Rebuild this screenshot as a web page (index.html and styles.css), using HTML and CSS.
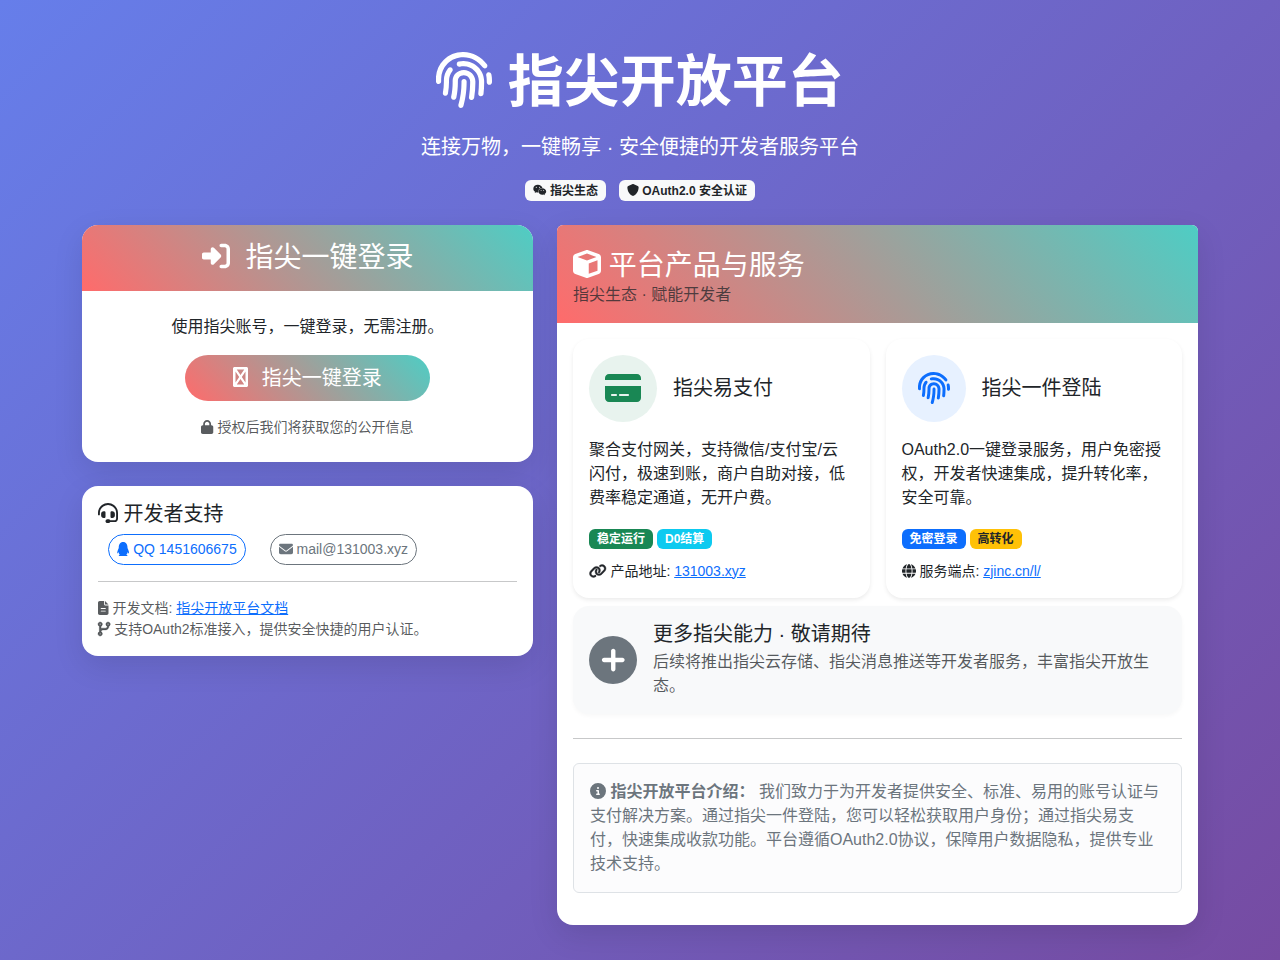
FILE: index.html
```html
<!DOCTYPE html>
<html lang="zh-CN">
<head>
    <meta charset="UTF-8">
    <meta name="viewport" content="width=device-width, initial-scale=1.0">
    <title>指尖开放平台</title>
    <link rel="stylesheet" href="styles.css">
</head>
<body>
    <svg class="sprite" aria-hidden="true">
        <symbol id="fingerprint" viewBox="0 0 512 512">
            <path d="M256.1 246c-13.25 0-23.1 10.75-23.1 23.1c1.125 72.25-8.124 141.9-27.75 211.5C201.7 491.3 206.6 512 227.5 512c10.5 0 20.12-6.875 23.12-17.5c13.5-47.87 30.1-125.4 29.5-224.5C280.1 256.8 269.4 246 256.1 246zM255.2 164.3C193.1 164.1 151.2 211.3 152.1 265.4c.75 47.87-3.75 95.87-13.37 142.5c-2.75 12.1 5.624 25.62 18.62 28.37c12.1 2.625 25.62-5.625 28.37-18.62c10.37-50.12 15.12-101.6 14.37-152.1C199.7 238.6 219.1 212.1 254.5 212.3c31.37 .5 57.24 25.37 57.62 55.5c.8749 47.1-2.75 96.25-10.62 143.5c-2.125 12.1 6.749 25.37 19.87 27.62c19.87 3.25 26.75-15.12 27.5-19.87c8.249-49.1 12.12-101.1 11.25-151.1C359.2 211.1 312.2 165.1 255.2 164.3zM144.6 144.5C134.2 136.1 119.2 137.6 110.7 147.9C85.25 179.4 71.38 219.3 72 259.9c.6249 37.62-2.375 75.37-8.999 112.1c-2.375 12.1 6.249 25.5 19.25 27.87c20.12 3.5 27.12-14.87 27.1-19.37c7.124-39.87 10.5-80.62 9.749-121.4C119.6 229.3 129.2 201.3 147.1 178.3C156.4 167.9 154.9 152.9 144.6 144.5zM253.1 82.14C238.6 81.77 223.1 83.52 208.2 87.14c-12.87 2.1-20.87 15.1-17.87 28.87c3.125 12.87 15.1 20.75 28.1 17.75C230.4 131.3 241.7 130 253.4 130.1c75.37 1.125 137.6 61.5 138.9 134.6c.5 37.87-1.375 75.1-5.624 113.6c-1.5 13.12 7.999 24.1 21.12 26.5c16.75 1.1 25.5-11.87 26.5-21.12c4.625-39.75 6.624-79.75 5.999-119.7C438.6 165.3 355.1 83.64 253.1 82.14zM506.1 203.6c-2.875-12.1-15.51-21.25-28.63-18.38c-12.1 2.875-21.12 15.75-18.25 28.62c4.75 21.5 4.875 37.5 4.75 61.62c-.1249 13.25 10.5 24.12 23.75 24.25c13.12 0 24.12-10.62 24.25-23.87C512.1 253.8 512.3 231.8 506.1 203.6zM465.1 112.9c-48.75-69.37-128.4-111.7-213.3-112.9c-69.74-.875-134.2 24.84-182.2 72.96c-46.37 46.37-71.34 108-70.34 173.6l-.125 21.5C-.3651 281.4 10.01 292.4 23.26 292.8C23.51 292.9 23.76 292.9 24.01 292.9c12.1 0 23.62-10.37 23.1-23.37l.125-23.62C47.38 193.4 67.25 144 104.4 106.9c38.87-38.75 91.37-59.62 147.7-58.87c69.37 .1 134.7 35.62 174.6 92.37c7.624 10.87 22.5 13.5 33.37 5.875C470.1 138.6 473.6 123.8 465.1 112.9z"/>
        </symbol>
    </svg>

    <div class="container">
        <header class="hero">
            <h1><svg class="icon"><use href="#fingerprint"/></svg> 指尖开放平台</h1>
            <p class="lead">连接万物，一键畅享 · 安全便捷的开发者服务平台</p>
            <div class="hero-badges">
                <span class="badge badge-light"><svg class="icon" viewBox="0 0 576 512"><path d="M385.2 167.6c6.4 0 12.6.3 18.8 1.1C387.4 90.3 303.3 32 207.7 32 100.5 32 13 104.8 13 197.4c0 53.4 29.3 97.5 77.9 131.6l-19.3 58.6 68-34.1c24.4 4.8 43.8 9.7 68.2 9.7 6.2 0 12.1-.3 18.3-.8-4-12.9-6.2-26.6-6.2-40.8-.1-84.9 72.9-154 165.3-154zm-104.5-52.9c14.5 0 24.2 9.7 24.2 24.4 0 14.5-9.7 24.2-24.2 24.2-14.8 0-29.3-9.7-29.3-24.2.1-14.7 14.6-24.4 29.3-24.4zm-136.4 48.6c-14.5 0-29.3-9.7-29.3-24.2 0-14.8 14.8-24.4 29.3-24.4 14.8 0 24.4 9.7 24.4 24.4 0 14.6-9.6 24.2-24.4 24.2zM563 319.4c0-77.9-77.9-141.3-165.4-141.3-92.7 0-165.4 63.4-165.4 141.3S305 460.7 397.6 460.7c19.3 0 38.9-5.1 58.6-9.9l53.4 29.3-14.8-48.6C534 402.1 563 363.2 563 319.4zm-219.1-24.5c-9.7 0-19.3-9.7-19.3-19.6 0-9.7 9.7-19.3 19.3-19.3 14.8 0 24.4 9.7 24.4 19.3 0 10-9.7 19.6-24.4 19.6zm107.1 0c-9.7 0-19.3-9.7-19.3-19.6 0-9.7 9.7-19.3 19.3-19.3 14.5 0 24.4 9.7 24.4 19.3.1 10-9.9 19.6-24.4 19.6z"/></svg> 指尖生态</span>
                <span class="badge badge-light"><svg class="icon" viewBox="0 0 512 512"><path d="M256 0c4.6 0 9.2 1 13.4 2.9L457.7 82.8c22 9.3 38.4 31 38.3 57.2c-.5 99.2-41.3 280.7-213.6 363.2c-16.7 8-36.1 8-52.8 0C57.3 420.7 16.5 239.2 16 140c-.1-26.2 16.3-47.9 38.3-57.2L242.7 2.9C246.8 1 251.4 0 256 0z"/></svg> OAuth2.0 安全认证</span>
            </div>
        </header>

        <main class="row">
            <div class="side">
                <section class="card">
                    <div class="card-header login-header">
                        <h2><svg class="icon me-2" viewBox="0 0 512 512"><path d="M217.9 105.9L340.7 228.7c7.2 7.2 11.3 17.1 11.3 27.3s-4.1 20.1-11.3 27.3L217.9 406.1c-6.4 6.4-15 9.9-24 9.9c-18.7 0-33.9-15.2-33.9-33.9l0-62.1L32 320c-17.7 0-32-14.3-32-32l0-64c0-17.7 14.3-32 32-32l128 0 0-62.1c0-18.7 15.2-33.9 33.9-33.9c9 0 17.6 3.6 24 9.9zM352 416l64 0c17.7 0 32-14.3 32-32l0-256c0-17.7-14.3-32-32-32l-64 0c-17.7 0-32-14.3-32-32s14.3-32 32-32l64 0c53 0 96 43 96 96l0 256c0 53-43 96-96 96l-64 0c-17.7 0-32-14.3-32-32s14.3-32 32-32z"/></svg> 指尖一键登录</h2>
                    </div>
                    <div class="login-body">
                        <p>使用指尖账号，一键登录，无需注册。</p>
                        <button type="button" class="login-btn"><svg class="icon me-2" viewBox="0 0 384 512"><path fill-rule="evenodd" d="M40 0H344C366 0 384 18 384 40V472C384 494 366 512 344 512H40C18 512 0 494 0 472V40C0 18 18 0 40 0zM96 64L192 205 288 64zM320 115L226 256 320 397zM288 448L192 307 96 448zM64 397L158 256 64 115z"/></svg> 指尖一键登录</button>
                        <p class="small muted"><svg class="icon" viewBox="0 0 448 512"><path d="M144 144l0 48 160 0 0-48c0-44.2-35.8-80-80-80s-80 35.8-80 80zM80 192l0-48C80 64.5 144.5 0 224 0s144 64.5 144 144l0 48 16 0c35.3 0 64 28.7 64 64l0 192c0 35.3-28.7 64-64 64L64 512c-35.3 0-64-28.7-64-64L0 256c0-35.3 28.7-64 64-64l16 0z"/></svg> 授权后我们将获取您的公开信息</p>
                    </div>
                </section>

                <section class="card support">
                    <h3><svg class="icon" viewBox="0 0 512 512"><path d="M256 48C141.1 48 48 141.1 48 256l0 40c0 13.3-10.7 24-24 24s-24-10.7-24-24l0-40C0 114.6 114.6 0 256 0S512 114.6 512 256l0 144.1c0 48.6-39.4 88-88.1 88L313.6 488c-8.3 14.3-23.8 24-41.6 24l-32 0c-26.5 0-48-21.5-48-48s21.5-48 48-48l32 0c17.8 0 33.3 9.7 41.6 24l110.4 .1c22.1 0 40-17.9 40-40L464 256c0-114.9-93.1-208-208-208zM144 208l16 0c17.7 0 32 14.3 32 32l0 112c0 17.7-14.3 32-32 32l-16 0c-35.3 0-64-28.7-64-64l0-48c0-35.3 28.7-64 64-64zm224 0c35.3 0 64 28.7 64 64l0 48c0 35.3-28.7 64-64 64l-16 0c-17.7 0-32-14.3-32-32l0-112c0-17.7 14.3-32 32-32l16 0z"/></svg> 开发者支持</h3>
                    <div class="contacts">
                        <a href="#" class="contact contact-qq"><svg class="icon" viewBox="0 0 448 512"><path d="M433.754 420.445c-11.526 1.393-44.86-52.741-44.86-52.741 0 31.345-16.136 72.247-51.051 101.786 16.842 5.192 54.843 19.167 45.803 34.421-7.316 12.343-125.51 7.881-159.632 4.037-34.122 3.844-152.316 8.306-159.632-4.037-9.045-15.25 28.918-29.214 45.783-34.415-34.92-29.539-51.059-70.445-51.059-101.792 0 0-33.334 54.134-44.859 52.741-5.37-.65-12.424-29.644 9.347-99.704 10.261-33.024 21.995-60.478 40.144-105.779C60.683 98.063 108.982.006 224 0c113.737.006 163.156 96.133 160.264 214.963 18.118 45.223 29.912 72.85 40.144 105.778 21.768 70.06 14.716 99.053 9.346 99.704z"/></svg> QQ 1451606675</a>
                        <a href="mailto:mail@131003.xyz" class="contact contact-mail"><svg class="icon" viewBox="0 0 512 512"><path d="M48 64C21.5 64 0 85.5 0 112c0 15.1 7.1 29.3 19.2 38.4L236.8 313.6c11.4 8.5 27 8.5 38.4 0L492.8 150.4c12.1-9.1 19.2-23.3 19.2-38.4c0-26.5-21.5-48-48-48L48 64zM0 176L0 384c0 35.3 28.7 64 64 64l384 0c35.3 0 64-28.7 64-64l0-208L294.4 339.2c-22.8 17.1-54 17.1-76.8 0L0 176z"/></svg> mail@131003.xyz</a>
                    </div>
                    <hr>
                    <p class="small muted"><svg class="icon" viewBox="0 0 384 512"><path fill-rule="evenodd" d="M64 0C28.7 0 0 28.7 0 64L0 448c0 35.3 28.7 64 64 64l256 0c35.3 0 64-28.7 64-64l0-288-128 0c-17.7 0-32-14.3-32-32L224 0 64 0zM256 0l0 128 128 0L256 0zM112 256l160 0c8.8 0 16 7.2 16 16s-7.2 16-16 16l-160 0c-8.8 0-16-7.2-16-16s7.2-16 16-16zm0 96l160 0c8.8 0 16 7.2 16 16s-7.2 16-16 16l-160 0c-8.8 0-16-7.2-16-16s7.2-16 16-16z"/></svg> 开发文档: <a href="#">指尖开放平台文档</a></p>
                    <p class="small muted"><svg class="icon icon-bold" viewBox="0 0 448 512"><path d="M80 104a24 24 0 1 0 0-48 24 24 0 1 0 0 48zm80-24c0 32.8-19.7 61-48 73.3l0 87.8c18.8-10.9 40.7-17.1 64-17.1l96 0c35.3 0 64-28.7 64-64l0-6.7C307.7 141 288 112.8 288 80c0-44.2 35.8-80 80-80s80 35.8 80 80c0 32.8-19.7 61-48 73.3l0 6.7c0 70.7-57.3 128-128 128l-96 0c-35.3 0-64 28.7-64 64l0 6.7c28.3 12.3 48 40.5 48 73.3c0 44.2-35.8 80-80 80s-80-35.8-80-80c0-32.8 19.7-61 48-73.3l0-6.7 0-198.7C19.7 141 0 112.8 0 80C0 35.8 35.8 0 80 0s80 35.8 80 80zm232 0a24 24 0 1 0 -48 0 24 24 0 1 0 48 0zM80 456a24 24 0 1 0 0-48 24 24 0 1 0 0 48z"/></svg> 支持OAuth2标准接入，提供安全快捷的用户认证。</p>
                </section>
            </div>

            <section class="card products">
                <div class="card-header products-header">
                    <h2><svg class="icon" viewBox="0 0 512 512"><path d="M234.5 5.7c13.9-5 29.1-5 43.1 0l192 68.6C495 83.4 512 107.5 512 134.6l0 242.9c0 27-17 51.2-42.5 60.3l-192 68.6c-13.9 5-29.1 5-43.1 0l-192-68.6C17 428.6 0 404.5 0 377.4L0 134.6c0-27 17-51.2 42.5-60.3l192-68.6zM256 66L82.3 128 256 190l173.7-62L256 66zm32 368.6l160-57.1 0-188L288 246.6l0 188z"/></svg> 平台产品与服务</h2>
                    <p class="muted">指尖生态 · 赋能开发者</p>
                </div>
                <div class="products-body">
                    <div class="product-grid">
                        <article class="product">
                            <div class="product-title">
                                <span class="product-icon pay"><svg class="icon" viewBox="0 0 576 512"><path fill-rule="evenodd" d="M64 32C28.7 32 0 60.7 0 96l0 32 576 0 0-32c0-35.3-28.7-64-64-64L64 32zM576 224L0 224 0 416c0 35.3 28.7 64 64 64l448 0c35.3 0 64-28.7 64-64l0-192zM112 352l64 0c8.8 0 16 7.2 16 16s-7.2 16-16 16l-64 0c-8.8 0-16-7.2-16-16s7.2-16 16-16zm112 16c0-8.8 7.2-16 16-16l128 0c8.8 0 16 7.2 16 16s-7.2 16-16 16l-128 0c-8.8 0-16-7.2-16-16z"/></svg></span>
                                <h3>指尖易支付</h3>
                            </div>
                            <p>聚合支付网关，支持微信/支付宝/云闪付，极速到账，商户自助对接，低费率稳定通道，无开户费。</p>
                            <div class="tags">
                                <span class="badge badge-green">稳定运行</span>
                                <span class="badge badge-cyan">D0结算</span>
                            </div>
                            <p class="small"><svg class="icon icon-bold" viewBox="0 0 640 512"><path d="M579.8 267.7c56.5-56.5 56.5-148 0-204.5c-50-50-128.8-56.5-186.3-15.4l-1.6 1.1c-14.4 10.3-17.7 30.3-7.4 44.6s30.3 17.7 44.6 7.4l1.6-1.1c32.1-22.9 76-19.3 103.8 8.6c31.5 31.5 31.5 82.5 0 114L422.3 334.8c-31.5 31.5-82.5 31.5-114 0c-27.9-27.9-31.5-71.8-8.6-103.8l1.1-1.6c10.3-14.4 6.9-34.4-7.4-44.6s-34.4-6.9-44.6 7.4l-1.1 1.6C206.5 251.2 213 330 263 380c56.5 56.5 148 56.5 204.5 0L579.8 267.7zM60.2 244.3c-56.5 56.5-56.5 148 0 204.5c50 50 128.8 56.5 186.3 15.4l1.6-1.1c14.4-10.3 17.7-30.3 7.4-44.6s-30.3-17.7-44.6-7.4l-1.6 1.1c-32.1 22.9-76 19.3-103.8-8.6C74 372 74 321 105.5 289.5L217.7 177.2c31.5-31.5 82.5-31.5 114 0c27.9 27.9 31.5 71.8 8.6 103.9l-1.1 1.6c-10.3 14.4-6.9 34.4 7.4 44.6s34.4 6.9 44.6-7.4l1.1-1.6C433.5 260.8 427 182 377 132c-56.5-56.5-148-56.5-204.5 0L60.2 244.3z"/></svg> 产品地址: <a href="#">131003.xyz</a></p>
                        </article>
                        <article class="product">
                            <div class="product-title">
                                <span class="product-icon login"><svg class="icon"><use href="#fingerprint"/></svg></span>
                                <h3>指尖一件登陆</h3>
                            </div>
                            <p>OAuth2.0一键登录服务，用户免密授权，开发者快速集成，提升转化率，安全可靠。</p>
                            <div class="tags">
                                <span class="badge badge-blue">免密登录</span>
                                <span class="badge badge-yellow">高转化</span>
                            </div>
                            <p class="small"><svg class="icon" viewBox="0 0 512 512"><path d="M352 256c0 22.2-1.2 43.6-3.3 64l-185.3 0c-2.2-20.4-3.3-41.8-3.3-64s1.2-43.6 3.3-64l185.3 0c2.2 20.4 3.3 41.8 3.3 64zm28.8-64l123.1 0c5.3 20.5 8.1 41.9 8.1 64s-2.8 43.5-8.1 64l-123.1 0c2.1-20.6 3.2-42 3.2-64s-1.1-43.4-3.2-64zm112.6-32l-116.7 0c-10-63.9-29.8-117.4-55.3-151.6c78.3 20.7 142 77.5 171.9 151.6zm-149.1 0l-176.6 0c6.1-36.4 15.5-68.6 27-94.7c10.5-23.6 22.2-40.7 33.5-51.5C239.4 3.2 248.7 0 256 0s16.6 3.2 27.8 13.8c11.3 10.8 23 27.9 33.5 51.5c11.6 26 20.9 58.2 27 94.7zm-209 0L18.6 160C48.6 85.9 112.2 29.1 190.6 8.4C165.1 42.6 145.3 96.1 135.3 160zM8.1 192l123.1 0c-2.1 20.6-3.2 42-3.2 64s1.1 43.4 3.2 64L8.1 320C2.8 299.5 0 278.1 0 256s2.8-43.5 8.1-64zM194.7 446.6c-11.6-26-20.9-58.2-27-94.6l176.6 0c-6.1 36.4-15.5 68.6-27 94.6c-10.5 23.6-22.2 40.7-33.5 51.5C272.6 508.8 263.3 512 256 512s-16.6-3.2-27.8-13.8c-11.3-10.8-23-27.9-33.5-51.5zM135.3 352c10 63.9 29.8 117.4 55.3 151.6C112.2 482.9 48.6 426.1 18.6 352l116.7 0zm358.1 0c-30 74.1-93.6 130.9-171.9 151.6c25.5-34.2 45.2-87.7 55.3-151.6l116.7 0z"/></svg> 服务端点: <a href="#">zjinc.cn/l/</a></p>
                        </article>
                    </div>

                    <div class="more">
                        <span class="more-icon"><svg class="icon" viewBox="0 0 448 512"><path d="M264 88c0-22-18-40-40-40s-40 18-40 40l0 128L56 216c-22 0-40 18-40 40s18 40 40 40l128 0 0 128c0 22 18 40 40 40s40-18 40-40l0-128 128 0c22 0 40-18 40-40s-18-40-40-40l-128 0z"/></svg></span>
                        <div>
                            <h3>更多指尖能力 · 敬请期待</h3>
                            <p class="muted">后续将推出指尖云存储、指尖消息推送等开发者服务，丰富指尖开放生态。</p>
                        </div>
                    </div>

                    <hr>

                    <div class="intro">
                        <svg class="icon" viewBox="0 0 512 512"><path d="M256 512A256 256 0 1 0 256 0a256 256 0 1 0 0 512zM216 336l24 0 0-64-24 0c-13.3 0-24-10.7-24-24s10.7-24 24-24l48 0c13.3 0 24 10.7 24 24l0 88 8 0c13.3 0 24 10.7 24 24s-10.7 24-24 24l-80 0c-13.3 0-24-10.7-24-24s10.7-24 24-24zm40-208a32 32 0 1 1 0 64 32 32 0 1 1 0-64z"/></svg>
                        <strong>指尖开放平台介绍：</strong> 我们致力于为开发者提供安全、标准、易用的账号认证与支付解决方案。通过指尖一件登陆，您可以轻松获取用户身份；通过指尖易支付，快速集成收款功能。平台遵循OAuth2.0协议，保障用户数据隐私，提供专业技术支持。
                    </div>
                </div>
            </section>
        </main>
    </div>
</body>
</html>
```
FILE: styles.css
```css
* {
    box-sizing: border-box;
}

body {
    margin: 0;
    min-height: 100vh;
    font-family: "Liberation Sans", "Noto Sans CJK SC", sans-serif;
    font-size: 16px;
    line-height: 24px;
    color: #212529;
    background: linear-gradient(135deg, #667eea 0%, #764ba2 100%);
}

h1, h2, h3, p {
    margin: 0;
    font-weight: 400;
}

h2 {
    font-size: 28px;
    line-height: 34px;
}

h3 {
    font-size: 20px;
    line-height: 24px;
}

a {
    color: #0d6efd;
}

hr {
    margin: 16px 0;
    border: 0;
    border-top: 1px solid #c7c8c9;
}

.sprite {
    display: none;
}

.icon {
    display: inline-block;
    height: 1em;
    width: auto;
    fill: currentColor;
    vertical-align: -0.125em;
}

.small .icon,
.contact .icon {
    vertical-align: -2px;
}

.icon-bold {
    stroke: currentColor;
    stroke-width: 14;
    overflow: visible;
}

.me-2 {
    margin-right: 8px;
}

.small {
    font-size: 14px;
    line-height: 21px;
}

.muted {
    color: rgba(33, 37, 41, 0.75);
}

.container {
    max-width: 1140px;
    margin: 0 auto;
    padding: 48px 12px 32px;
}

/* Header */
.hero {
    text-align: center;
    color: #fff;
    margin-bottom: 24px;
}

.hero h1 {
    font-size: 56px;
    line-height: 68px;
    font-weight: 700;
    margin-bottom: 16px;
}

.hero h1 .icon,
.product-icon.login .icon {
    width: 1em;
}

.lead {
    font-size: 20px;
    line-height: 30px;
    margin-bottom: 18px;
}

.hero-badges {
    display: flex;
    justify-content: center;
    gap: 13px;
}

.badge {
    display: inline-block;
    padding: 4px 8px;
    font-size: 12px;
    line-height: 12px;
    font-weight: 700;
    color: #fff;
    white-space: nowrap;
    border-radius: 6px;
}

.badge-light {
    background: #f8f9fa;
    color: #212529;
}

.badge-green {
    background: #198754;
}

.badge-cyan {
    background: #0dcaf0;
}

.badge-blue {
    background: #0d6efd;
}

.badge-yellow {
    background: #ffc107;
    color: #212529;
}

/* Layout */
.row {
    display: grid;
    grid-template-columns: 1fr;
    gap: 24px;
    align-items: start;
}

.side {
    display: grid;
    gap: 24px;
}

.card {
    background: #fff;
    border-radius: 16px;
    box-shadow: 0 10px 30px rgba(0, 0, 0, 0.1);
    overflow: hidden;
}

.card-header {
    color: #fff;
    background: linear-gradient(45deg, #ff6b6b, #4ecdc4);
}

/* Login card */
.login-header {
    padding: 16px;
    text-align: center;
}

.login-body {
    padding: 24px;
    text-align: center;
}

.login-btn {
    margin: 16px 0;
    padding: 8px 48px;
    font-family: inherit;
    font-size: 20px;
    line-height: 30px;
    color: #fff;
    background: linear-gradient(45deg, #ff6b6b, #4ecdc4);
    border: 0;
    border-radius: 50px;
    cursor: pointer;
    vertical-align: top;
}

/* Support card */
.support {
    padding: 16px;
}

.contacts {
    display: flex;
    flex-wrap: wrap;
    gap: 8px 24px;
    margin-top: 8px;
    padding-left: 10px;
}

.contact {
    padding: 4px 8px;
    font-size: 14px;
    line-height: 21px;
    text-decoration: none;
    border: 1px solid currentColor;
    border-radius: 50px;
}

.contact-qq {
    color: #0d6efd;
}

.contact-mail {
    color: #6c757d;
}

/* Products card */
.products {
    border-radius: 6px 6px 16px 16px;
}

.products-header {
    padding: 24px 16px 16px;
}

.products-body {
    padding: 16px;
}

.product-grid {
    display: grid;
    grid-template-columns: repeat(auto-fit, minmax(240px, 1fr));
    gap: 16px;
}

.product {
    padding: 16px;
    border-radius: 16px;
    box-shadow: 0 2px 4px rgba(0, 0, 0, 0.08);
}

.product-title {
    display: flex;
    align-items: center;
    gap: 16px;
    margin-bottom: 16px;
}

.product-icon {
    display: flex;
    align-items: center;
    padding: 16px;
    height: 67px;
    font-size: 32px;
    border-radius: 50%;
}

.product-icon.pay {
    color: #198754;
    background: #e8f3ee;
}

.product-icon.login {
    color: #0d6efd;
    background: #e7f1ff;
}

.tags {
    display: flex;
    gap: 4px;
    margin: 19px 0 12px;
}

.more {
    display: flex;
    align-items: center;
    gap: 16px;
    margin-top: 8px;
    padding: 16px;
    background: #f8f9fa;
    border-radius: 16px;
    box-shadow: 0 2px 4px rgba(0, 0, 0, 0.03);
}

.more h3 {
    margin-bottom: 4px;
}

.more-icon {
    display: flex;
    flex: none;
    align-items: center;
    justify-content: center;
    width: 48px;
    height: 48px;
    font-size: 28px;
    color: #fff;
    background: #6c757d;
    border-radius: 50%;
}

.products-body hr {
    margin: 24px 0;
}

.intro {
    margin-bottom: 16px;
    padding: 16px;
    color: #6c757d;
    background: #fcfcfd;
    border: 1px solid #dee2e6;
    border-radius: 6px;
}

@media (min-width: 992px) {
    .row {
        grid-template-columns: 451fr 641fr;
    }
}
```
